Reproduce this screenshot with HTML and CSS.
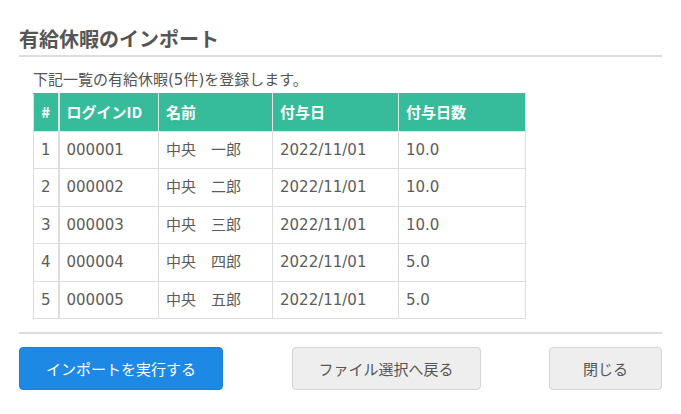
FILE: index.html
```html
<!DOCTYPE html>
<html lang="ja">
<head>
<meta charset="utf-8">
<title>有給休暇のインポート</title>
<link rel="stylesheet" href="styles.css">
</head>
<body>
<div class="dialog">
  <h1 class="title">有給休暇のインポート</h1>
  <div class="content">
    <p class="lead">下記一覧の有給休暇(5件)を登録します。</p>
    <table class="grid">
      <colgroup>
        <col class="c-no"><col class="c-id"><col class="c-name"><col class="c-date"><col class="c-days">
      </colgroup>
      <thead>
        <tr><th class="no">#</th><th>ログインID</th><th>名前</th><th>付与日</th><th>付与日数</th></tr>
      </thead>
      <tbody>
        <tr><td class="no">1</td><td>000001</td><td>中央　一郎</td><td>2022/11/01</td><td>10.0</td></tr>
        <tr><td class="no">2</td><td>000002</td><td>中央　二郎</td><td>2022/11/01</td><td>10.0</td></tr>
        <tr><td class="no">3</td><td>000003</td><td>中央　三郎</td><td>2022/11/01</td><td>10.0</td></tr>
        <tr><td class="no">4</td><td>000004</td><td>中央　四郎</td><td>2022/11/01</td><td>5.0</td></tr>
        <tr><td class="no">5</td><td>000005</td><td>中央　五郎</td><td>2022/11/01</td><td>5.0</td></tr>
      </tbody>
    </table>
  </div>
  <div class="actions">
    <button class="btn btn-primary">インポートを実行する</button>
    <button class="btn btn-back">ファイル選択へ戻る</button>
    <button class="btn btn-close">閉じる</button>
  </div>
</div>
</body>
</html>
```
FILE: styles.css
```css
html, body {
  margin: 0;
  padding: 0;
  background: #fff;
}
body {
  font-family: "DejaVu Sans", "Noto Sans CJK JP", sans-serif;
  color: #555;
}
.dialog {
  padding: 0 19px;
}
.title {
  margin: 0;
  padding-top: 26px;
  padding-bottom: 3px;
  line-height: 26px;
  font-size: 20px;
  font-weight: bold;
  color: #555;
  font-family: "Noto Sans CJK JP", sans-serif;
  border-bottom: 2px solid #ddd;
}
.content {
  padding: 0 14px;
  border-bottom: 2px solid #ddd;
  padding-bottom: 13px;
}
.lead {
  margin: 14px 0 4px;
  font-size: 15px;
  line-height: 18px;
  color: #555;
}
.grid {
  border-collapse: collapse;
  width: 492px;
  table-layout: fixed;
  font-size: 15px;
}
.c-no { width: 25px; }
.c-id { width: 100px; }
.c-name { width: 114px; }
.c-date { width: 126px; }
.c-days { width: 127px; }
.grid th, .grid td {
  border: 1px solid #ddd;
  padding: 7px 7px;
  line-height: 22.5px;
  text-align: left;
  white-space: nowrap;
}
.grid th {
  background: #37bc9b;
  color: #fff;
  font-weight: bold;
  font-family: "Noto Sans CJK JP", sans-serif;
  border-color: #e3e3e3;
  border-top-color: #37bc9b;
}
.grid td {
  color: #5c5c5c;
}
.grid .no {
  text-align: center;
  padding: 7px 0;
  border-right-width: 2px;
}
.actions {
  display: flex;
  justify-content: space-between;
  padding-top: 13px;
}
.btn {
  height: 43px;
  border-radius: 4px;
  font-family: "Noto Sans CJK JP", sans-serif;
  font-size: 15px;
  padding: 0;
  cursor: pointer;
}
.btn-primary {
  width: 204px;
  background: #1e88e5;
  border: 1px solid #1a7fd6;
  color: #fff;
}
.btn-back {
  width: 189px;
  background: #eee;
  border: 1px solid #d4d4d4;
  color: #555;
}
.btn-close {
  width: 113px;
  background: #eee;
  border: 1px solid #d4d4d4;
  color: #555;
}
```
